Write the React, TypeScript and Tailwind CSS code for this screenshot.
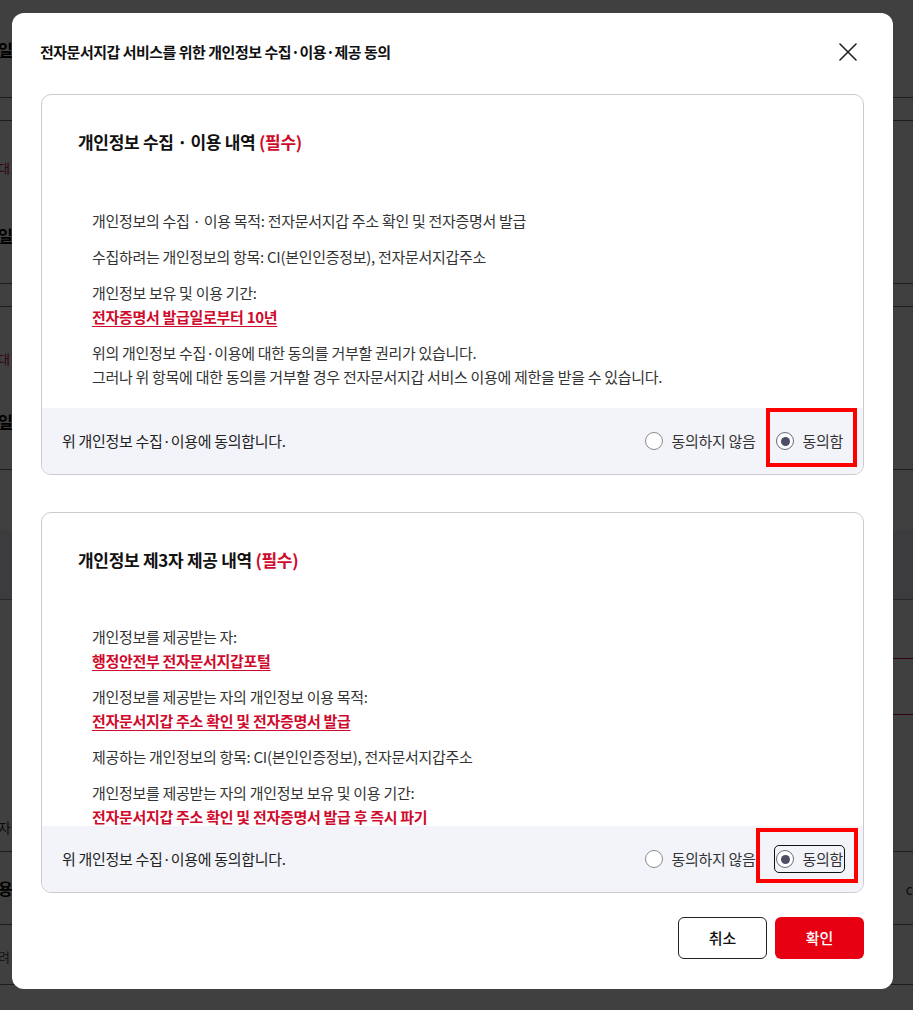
import React from "react";

const RED = "#cf0a2c";

function Radio({ checked, label }: { checked?: boolean; label: string }) {
  return (
    <span className="flex items-center gap-[8px]">
      <span
        className={`flex h-[18px] w-[18px] items-center justify-center rounded-full border bg-white ${
          checked ? "border-[#6b6b7a]" : "border-[#8a8a8a]"
        }`}
      >
        {checked && <span className="h-[9px] w-[9px] rounded-full bg-[#4d4d66]" />}
      </span>
      <span className="text-[15px] leading-6 tracking-[-0.3px] text-[#333]">{label}</span>
    </span>
  );
}

function P({ children }: { children: React.ReactNode }) {
  return <p className="mb-3 text-[15px] leading-6 tracking-[-0.3px] text-[#333]">{children}</p>;
}

function L({ children }: { children: React.ReactNode }) {
  return (
    <span className="block font-bold underline underline-offset-[3px]" style={{ color: RED }}>
      {children}
    </span>
  );
}

function Card({
  title,
  bodyTop,
  children,
  variant,
}: {
  title: string;
  bodyTop: string;
  children: React.ReactNode;
  variant: 1 | 2;
}) {
  return (
    <div className="flex h-[381px] flex-col overflow-hidden rounded-[10px] border border-[#cccccc] bg-white">
      <div className="flex-1 overflow-hidden pt-[35px]">
        <h3 className="pl-[36px] text-[17px] font-bold leading-6 tracking-[-0.3px] text-[#111]">
          {title} <span style={{ color: RED }}>(필수)</span>
        </h3>
        <div className={`${bodyTop} pl-[50px]`}>{children}</div>
      </div>
      <div className="relative flex h-[66px] shrink-0 items-center justify-between bg-[#f3f4f9] pl-[20px] pr-[20px]">
        <span className="text-[15px] leading-6 tracking-[-0.3px] text-[#222]">위 개인정보 수집·이용에 동의합니다.</span>
        <div className="flex items-center gap-[21px]">
          <Radio label="동의하지 않음" />
          <span className={variant === 2 ? "rounded-[3px] outline outline-[1.5px] outline-offset-[1px] outline-[#111]" : ""}>
            <Radio checked label="동의함" />
          </span>
        </div>
        {variant === 1 ? (
          <div className="pointer-events-none absolute left-[724px] top-0 h-[59px] w-[91px] border-[4px] border-[#ff0000]" />
        ) : (
          <div className="pointer-events-none absolute left-[714px] top-[2px] h-[55px] w-[102px] border-[4px] border-[#ff0000]" />
        )}
      </div>
    </div>
  );
}

function BgRow({
  h,
  left,
  right,
  border,
  className = "",
}: {
  h: string;
  left?: React.ReactNode;
  right?: React.ReactNode;
  border?: boolean;
  className?: string;
}) {
  return (
    <div className={`flex ${h} items-center justify-between ${border ? "border-b border-[#777]" : ""} ${className}`}>
      <div className="-ml-[2px]">{left}</div>
      <div>{right}</div>
    </div>
  );
}

export default function App() {
  const bold = <span className="text-[16px] font-bold text-black underline">일</span>;
  const red = <span className="text-[13px] text-[#c8102e]">대</span>;
  return (
    <div className="relative h-[1010px] w-[913px] overflow-hidden bg-white font-['Noto_Sans_CJK_KR','Noto_Sans',sans-serif]">
      {/* background page */}
      <div className="flex flex-col">
        <BgRow h="h-[98px]" border left={bold} />
        <BgRow h="h-[23px]" border />
        <div className="flex h-[163px] flex-col justify-start border-b border-[#777]">
          <div className="-ml-[2px] mt-[33px]">{red}</div>
          <div className="-ml-[2px] mt-[45px]">{bold}</div>
        </div>
        <BgRow h="h-[23px]" border />
        <div className="flex h-[163px] flex-col justify-start border-b border-[#777]">
          <div className="-ml-[2px] mt-[38px]">{red}</div>
          <div className="-ml-[2px] mt-[40px]">{bold}</div>
        </div>
        <div className="h-[60px]" />
        <div className="h-[70px] border-b border-[#9aa0c0] bg-[#eef0fb]" />
        <div className="relative h-[200px]">
          <div className="absolute left-[883px] top-[58px] h-[57px] w-[60px] rounded-[8px] border border-[#c8102e]" />
        </div>
        <BgRow h="h-[52px]" border left={<span className="text-[14px] text-[#333]">자</span>} />
        <BgRow h="h-[73px]" border left={<span className="text-[16px] font-bold text-black">용</span>} right={<span className="text-[14px] text-[#333]">c</span>} />
        <BgRow h="h-[60px]" border left={<span className="text-[13px] text-[#555]">려</span>} />
      </div>
      <div className="absolute inset-0 bg-black/75" />

      {/* modal */}
      <div className="absolute left-[12px] top-[13px] flex h-[976px] w-[881px] flex-col rounded-[12px] bg-white px-[29px]">
        <div className="flex h-[81px] items-start justify-between pt-[27px] pr-[7px]">
          <h2 className="-ml-px text-[15px] font-bold leading-6 tracking-[-0.5px] text-[#111]">
            전자문서지갑 서비스를 위한 개인정보 수집·이용·제공 동의
          </h2>
          <svg width="18" height="18" viewBox="0 0 18 18" className="mt-[3px]" fill="none" stroke="#222" strokeWidth="1.6" strokeLinecap="round">
            <path d="M1 1L17 17M17 1L1 17" />
          </svg>
        </div>

        <Card title="개인정보 수집 · 이용 내역" bodyTop="mt-[55px]" variant={1}>
          <P>개인정보의 수집 · 이용 목적: 전자문서지갑 주소 확인 및 전자증명서 발급</P>
          <P>수집하려는 개인정보의 항목: CI(본인인증정보), 전자문서지갑주소</P>
          <P>
            개인정보 보유 및 이용 기간:
            <L>전자증명서 발급일로부터 10년</L>
          </P>
          <P>
            위의 개인정보 수집·이용에 대한 동의를 거부할 권리가 있습니다.
            <br />
            그러나 위 항목에 대한 동의를 거부할 경우 전자문서지갑 서비스 이용에 제한을 받을 수 있습니다.
          </P>
        </Card>

        <div className="h-[37px]" />

        <Card title="개인정보 제3자 제공 내역" bodyTop="mt-[53px]" variant={2}>
          <P>
            개인정보를 제공받는 자:
            <L>행정안전부 전자문서지갑포털</L>
          </P>
          <P>
            개인정보를 제공받는 자의 개인정보 이용 목적:
            <L>전자문서지갑 주소 확인 및 전자증명서 발급</L>
          </P>
          <P>제공하는 개인정보의 항목: CI(본인인증정보), 전자문서지갑주소</P>
          <P>
            개인정보를 제공받는 자의 개인정보 보유 및 이용 기간:
            <L>전자문서지갑 주소 확인 및 전자증명서 발급 후 즉시 파기</L>
          </P>
        </Card>

        <div className="mt-[24px] flex justify-end gap-[8px]">
          <button className="h-[42px] w-[89px] rounded-[6px] border border-[#222] bg-white text-[15px] font-medium text-[#111]">
            취소
          </button>
          <button className="h-[42px] w-[89px] rounded-[6px] bg-[#e60012] text-[15px] font-medium text-white">
            확인
          </button>
        </div>
      </div>
    </div>
  );
}
